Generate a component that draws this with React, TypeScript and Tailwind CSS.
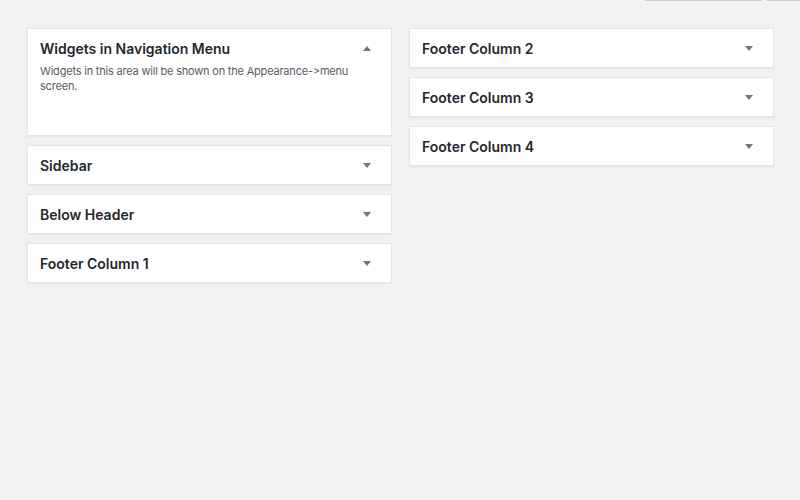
import React from "react";

type Area = { title: string; open?: boolean; text?: string };

const left: Area[] = [
  { title: "Widgets in Navigation Menu", open: true, text: "Widgets in this area will be shown on the Appearance->menu screen." },
  { title: "Sidebar" },
  { title: "Below Header" },
  { title: "Footer Column 1" },
];

const right: Area[] = [{ title: "Footer Column 2" }, { title: "Footer Column 3" }, { title: "Footer Column 4" }];

function Arrow({ up }: { up?: boolean }) {
  return (
    <svg width="8" height="5" viewBox="0 0 8 5" className="shrink-0">
      {up ? <path d="M0 5 L4 0 L8 5 Z" fill="#72777c" /> : <path d="M0 0 L8 0 L4 5 Z" fill="#72777c" />}
    </svg>
  );
}

function WidgetArea({ area }: { area: Area }) {
  return (
    <div className="border border-[#e5e5e5] bg-white shadow-[0_1px_1px_rgba(0,0,0,0.04)]">
      <div className="flex h-[38px] items-center justify-between pl-[12px] pr-[20px]">
        <h3 className="text-[14px] font-semibold text-[#23282d]">{area.title}</h3>
        <Arrow up={area.open} />
      </div>
      {area.open && (
        <p className="-mt-[3px] h-[71px] pl-[12px] pr-[20px] text-[11px] leading-[15px] tracking-[-0.2px] text-[#555d66]">
          {area.text}
        </p>
      )}
    </div>
  );
}

export default function App() {
  return (
    <div className="min-h-[500px] w-[800px] bg-[#f1f1f1]" style={{ fontFamily: "Inter, 'Open Sans', sans-serif" }}>
      <div className="flex h-px justify-end gap-[5px]">
        <div className="w-[117px] bg-[#cccccc]" />
        <div className="w-[33px] bg-[#cccccc]" />
      </div>
      <div className="flex gap-[17px] pl-[27px] pt-[27px]">
        <div className="flex w-[365px] flex-col gap-[9px]">
          {left.map((a) => (
            <WidgetArea key={a.title} area={a} />
          ))}
        </div>
        <div className="flex w-[365px] flex-col gap-[9px]">
          {right.map((a) => (
            <WidgetArea key={a.title} area={a} />
          ))}
        </div>
      </div>
    </div>
  );
}
